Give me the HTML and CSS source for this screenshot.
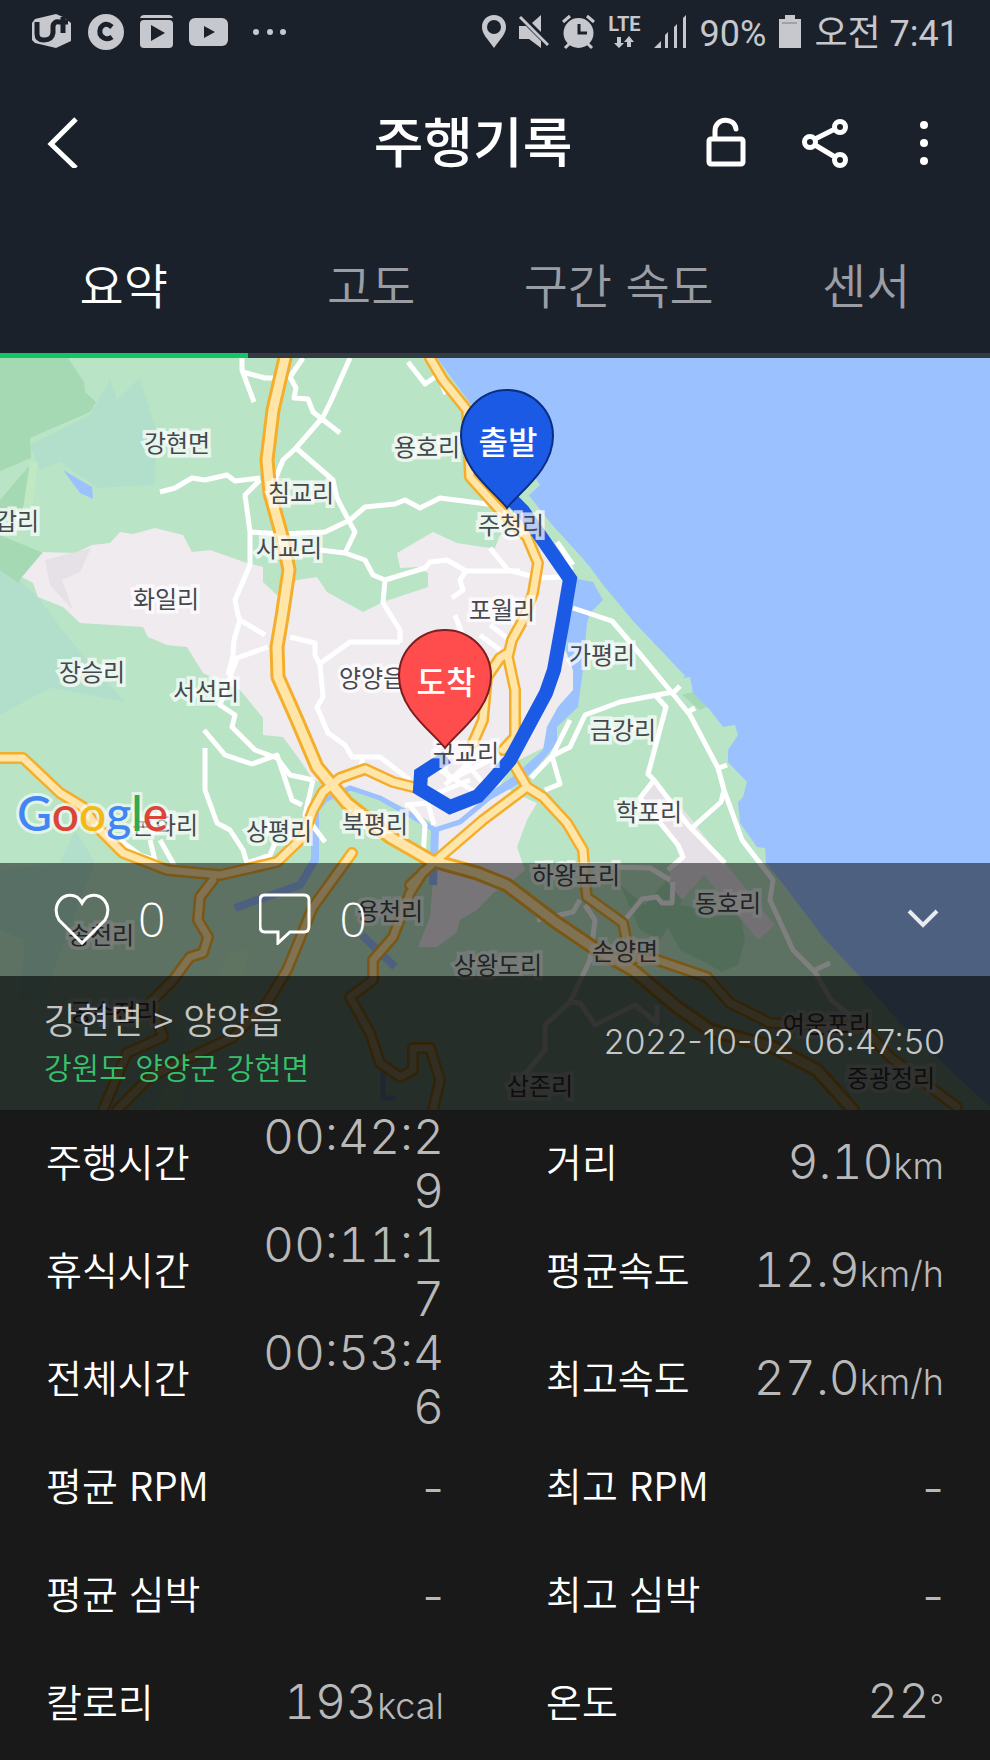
FILE: index.html
```html
<!DOCTYPE html>
<html lang="ko">
<head>
<meta charset="utf-8">
<meta name="viewport" content="width=device-width, initial-scale=1">
<title>주행기록</title>
<link rel="stylesheet" href="styles.css">
</head>
<body>
<div class="status">
  <div class="status-group notices">
    <svg width="40" height="36" viewBox="0 0 40 36"><path class="fill" d="M3 5 24 0 31 3 39 9V27L24 34 3 29 0 26V9z"/><path class="cut" d="M5 8V20Q5 26 12 26Q20 26 21 19V12Q22 7 27 8M26 8H36M31 3V19"/></svg>
    <svg width="36" height="36" viewBox="0 0 36 36"><circle class="fill" cx="18" cy="18" r="18"/><path class="cut" d="M24 13Q17 7 12.500 14Q10 21 16 24Q20 26 24 23"/></svg>
    <svg width="33" height="36" viewBox="0 0 33 36"><path class="fill" d="M0 4Q1 1 4 1H29Q32 1 33 4z"/><rect class="fill" y="6" width="33" height="28" rx="4"/><path class="hole" d="M11 11 25 19 11 27z"/></svg>
    <svg width="39" height="36" viewBox="0 0 39 36"><rect class="fill" y="4" width="39" height="28" rx="6"/><path class="hole" d="M15 12 26 18 15 24z"/></svg>
    <svg class="more-notices" width="36" height="36" viewBox="0 0 36 36"><g class="fill"><circle cx="4" cy="18" r="3"/><circle cx="18" cy="18" r="3"/><circle cx="31" cy="18" r="3"/></g></svg>
  </div>
  <div class="status-group">
    <svg width="24" height="36" viewBox="0 0 24 36"><path class="fill" fill-rule="evenodd" d="M12 1C5 1 0 6 0 13C0 20 5 24 12 34C19 24 24 20 24 13C24 6 19 1 12 1zM12 6A7 7 0 1 1 12 20A7 7 0 1 1 12 6z"/></svg>
    <svg width="30" height="36" viewBox="0 0 30 36"><path class="fill" d="M0 12H7L22 27V34L10 25H0zM22 1V18L13 9z"/><path class="slash" d="M1 3 29 31"/></svg>
    <svg width="33" height="36" viewBox="0 0 33 36"><circle class="fill" cx="16.500" cy="19" r="15"/><path class="slash" d="M1 8 8 2M25 2 32 8M3 34 8 29M30 34 25 29"/><path class="hand" d="M17 10V19H25"/></svg>
    <span class="lte">LTE<svg width="20" height="13" viewBox="0 0 20 13"><path class="fill" d="M3 1H7V7H10L5 12 0 7H3zM13 11H17V6H20L15 0 10 6H13z"/></svg></span>
    <svg width="33" height="36" viewBox="0 0 33 36"><path class="fill" d="M0 34 7 27V34zM11 21 14 18V34H11zM20 13 23 10V34H20zM29 4 32 1V34H29z"/></svg>
    <span class="status-text">90%</span>
    <svg width="22" height="36" viewBox="0 0 22 36"><path class="fill" d="M0 5H6V1H16V5H22V34H0z"/><path class="level" d="M3 9H18"/></svg>
    <span class="status-text">오전 7:41</span>
  </div>
</div>

<header class="bar">
  <button class="icon-btn" aria-label="뒤로"><svg width="34" height="52" viewBox="0 0 34 52"><path class="line" d="M30 3 5 28 30 52"/></svg></button>
  <h1 class="title">주행기록</h1>
  <div class="bar-actions">
    <button class="icon-btn" aria-label="잠금 해제"><svg width="40" height="52" viewBox="0 0 40 52"><rect class="line" x="3" y="23" width="34" height="25" rx="2"/><path class="line round" d="M9 22V15C9 1 29 1 30 13"/></svg></button>
    <button class="icon-btn" aria-label="공유"><svg width="48" height="52" viewBox="0 0 48 52"><g class="line"><circle cx="39" cy="11" r="5.500"/><circle cx="9" cy="26" r="5.500"/><circle cx="39" cy="44" r="5.500"/><path d="M14 23 34 13M14 29 34 41"/></g></svg></button>
    <button class="icon-btn" aria-label="더보기"><svg width="40" height="52" viewBox="0 0 40 52"><g class="dots"><circle cx="20" cy="9" r="4"/><circle cx="20" cy="27" r="4"/><circle cx="20" cy="45" r="4"/></g></svg></button>
  </div>
</header>

<nav class="tabs">
  <button class="tab active">요약</button>
  <button class="tab">고도</button>
  <button class="tab">구간 속도</button>
  <button class="tab">센서</button>
</nav>

<main>
<section class="map">
<svg class="map-canvas" viewBox="0 358 990 752" preserveAspectRatio="xMidYMid slice">
  <rect class="land" y="358" width="990" height="752"/>
  <path class="teal" d="M30 445 90 415 110 380 117 400 140 378 156 430 155 485 98 488 60 462 40 470zM0 560 40 600 70 640 125 702 90 695 50 688 0 715zM60 863 75 830 95 863 80 900 50 980 45 1000 20 1000 25 940 0 930V870zM120 1110 165 1010 200 1060 190 1110z"/>
  <path class="forest" d="M0 358H68L84 382 85 392 96 402 90 412 30 438 31 458 0 471zM0 500 30 465 25 510 0 530zM0 535 43 553 43 560 22 577 18 583 0 570z"/>
  <path class="pale" d="M30 462 38 462 32 512 22 515zM230 952 250 950 235 1005 190 1070 180 1110 155 1110 205 1000z"/>
  <path class="forest" d="M682 695 692 692 712 705 700 710zM620 885 645 905 680 865 700 860 680 905 740 912 745 940 738 965 722 972 700 960 680 950 668 928 660 940 640 930z"/>
  <path class="lake" d="M63 470 92 487 93 499 80 493z"/>
  <path class="urban" d="M22 577 43 552 75 553 92 545 110 543 120 532 133 534 155 528 183 535 192 552 210 550 247 563 263 567V582L277 595 297 580 317 577 327 592 363 612 383 602 428 587V573L417 567 400 568 397 553 433 532 457 543 483 547 495 548 500 535 525 528 563 580 562 610 565 650 573 670V690L558 707 547 727 545 747 515 762 500 785 530 800 537 803 527 820 517 847 525 870 510 883 493 893 477 910 460 920 457 932 437 947H418L430 917 433 880V823L403 807 383 797 360 790 340 787 313 780 300 760 283 737 263 735V718L240 690 203 673 187 647 167 645 148 637 143 627 80 623 63 607 38 597 33 583z"/>
  <path class="urban2" d="M654 780 688 815 725 863 775 925 758 940 740 918 704 875 682 900 668 882 670 873 685 858 679 850 680 843 640 800z"/>
  <path class="urban2" d="M45 560 91 548 80 572 62 580 73 610 50 585z"/>
  <path class="lake" d="M437 358 470 403 510 440 540 485 527 497 590 567 623 613 683 678 690 677 693 693 710 710 723 727 735 725 738 735 728 750V762L747 782 743 797 738 802 740 823 757 847 765 848 766 863 780 880 823 937 860 977 900 1023 990 1107V358z"/>
  <path class="shore" d="M525 495 550 527 580 560 595 580 630 622 683 678"/>
  <path class="lake" d="M572 578 593 582 603 600 590 613 587 623 583 670 578 707 557 727 557 743 537 767 520 783 490 800 484 796 515 775 543 750 547 727 558 707 573 690V670L566 650z"/>
  <path class="river" d="M490 797 460 822 435 830 410 815 380 798 350 788 325 800 315 812"/>
  <path class="river wide" d="M315 812V860L300 885 235 908M435 830 433 885M362 935 395 967"/>
  <path class="river" d="M383 1070V1098H396"/>

  <g class="street">
    <path d="M242 358 242 370 254 402M243 372 265 378H275M303 358 290 377 296 388 294 398 308 399 313 412 340 433M350 358 330 403 323 417 296 448 283 460 275 480M296 448 333 480 337 498 350 523 355 532 345 553M160 492 175 488 192 478 205 480 227 475 235 481 260 478M260 480 245 495 250 532V565L235 600 238 615 240 620 265 635M250 532 283 534 325 532 350 520 365 507 395 504 405 500 420 508 440 498 495 505M320 550 345 553 365 560 373 575 385 580 425 568 430 562 447 560 466 571 520 571M385 580 383 603 400 630V643M466 571 460 580 463 590 452 598M408 362 425 384 438 375 446 394"/>
    <path d="M240 620 234 640 233 655 228 675M268 647 237 658 220 705 235 715 232 727 255 750 277 758 290 775 313 780M204 730 225 755 252 764 277 755 292 800 302 805M205 748V790L217 823 230 830 243 850 247 863 270 855 275 843M290 637 315 643V655L320 665 323 697 317 707 328 733 345 745 352 757H380L410 780M318 665 350 642H400M363 757 360 770M313 780 305 815 325 842M120 840 140 855 155 860 150 840M160 840 178 872M408 803 425 825 423 857M405 805 428 803 434 825"/>
    <path d="M530 523 572 570M557 542 573 565M490 548 508 570 538 578 562 577M573 608 612 621 630 642 673 694 690 715 718 768 724 790 742 840 773 880 770 900 793 950 815 972 831 1000 850 1015M673 692 620 702 585 715 570 747 552 756 531 778M570 720 552 756 560 784 545 790M655 695 666 707 648 774 654 780 688 825 725 863M654 780 640 798 678 845 683 857 668 870M724 790 721 802 693 827M673 693 680 686M686 713 695 708M719 768 727 765M670 880 650 868 610 867M673 882 672 903H662L657 897 642 899 625 920M580 900 573 912 537 920M585 905 595 920 590 960 570 1002 545 1025V1050L520 1080M570 1002 580 1003 595 1025 635 1005 657 1023V1005M815 970 830 963"/>
    <path d="M455 615 470 655M490 625 510 640M480 635 500 650M435 748 450 780 490 760M440 770 480 795M445 785 472 760M460 755 482 782M433 795 470 780M445 857 460 870"/>
  </g>
  <g id="major" class="casing">
    <path d="M0 758H23L60 793 83 807 97 827 123 853 167 870 220 875 277 862 303 837 313 810 323 792 340 778 365 769 393 782 413 787"/>
    <path d="M430 358 443 380 467 410 470 477 497 507 527 537 538 563 533 593 523 620 512 640 508 657 515 690 515 737 503 750M508 653 500 658 487 677 483 720 473 743"/>
    <path d="M410 885 440 857 483 820 527 787 513 763M527 787 543 797 567 823 583 850 585 880 587 897 623 923 630 958 657 960 707 977 730 1003 770 1023 863 1027 890 1057 957 1107"/>
    <path d="M352 853 313 907 287 970 267 1003 233 1037 150 1077 117 1110"/>
    <path d="M213 880 200 897 198 920 208 937 203 953 190 957 173 980 150 1003 163 1037 127 1053 103 1110M423 872 410 893 393 937 373 960V980L350 997 370 1033 380 1063 400 1077 413 1070V1048H430L440 1080 433 1110"/>
    <path class="trunk" d="M285 358 273 410 267 460 270 493 283 540 289 570 282 617 277 647 278 677 297 720 317 767 347 803 390 837 430 860 477 873 507 885 557 923 597 950 633 970 677 1007 710 1030 773 1047 817 1070 853 1110"/>
  </g>
  <use href="#major" class="inner"/>

  <path class="route" d="M507 495 523 511 570 579 563 620 554 670 546 693 510 760 490 783 478 796 450 807 420 789 421 774 447 757"/>

  <g class="place">
    <text x="177" y="452">강현면</text><text x="427" y="456">용호리</text><text x="301" y="502">침교리</text><text x="289" y="557">사교리</text><text x="6" y="530">답갑리</text><text x="166" y="608">화일리</text><text x="511" y="534">주청리</text><text x="502" y="619">포월리</text><text x="602" y="664">가평리</text><text x="92" y="681">장승리</text><text x="206" y="700">서선리</text><text x="372" y="687">양양읍</text><text x="466" y="762">구교리</text><text x="623" y="739">금강리</text><text x="649" y="821">학포리</text><text x="165" y="834">논화리</text><text x="279" y="840">상평리</text><text x="375" y="833">북평리</text><text x="576" y="884">하왕도리</text><text x="728" y="912">동호리</text><text x="390" y="920">용천리</text><text x="101" y="944">송천리</text><text x="498" y="974">상왕도리</text><text x="625" y="960">손양면</text><text x="114" y="1021">공수전리</text><text x="827" y="1033">여운포리</text><text x="540" y="1095">삽존리</text><text x="891" y="1087">중광정리</text>
  </g>
  <g class="pin">
    <path class="start" d="M507 508C495 492 461 470 461 436A46 46 0 0 1 553 436C553 470 519 492 507 508z"/>
    <path class="end" d="M445 748C433 732 399 710 399 676A46 46 0 0 1 491 676C491 710 457 732 445 748z"/>
    <text x="508" y="454">출발</text><text x="446" y="694">도착</text>
  </g>
  <text class="google" x="17" y="831"><tspan class="g-blue">G</tspan><tspan class="g-red">o</tspan><tspan class="g-yellow">o</tspan><tspan class="g-blue">g</tspan><tspan class="g-green">l</tspan><tspan class="g-red">e</tspan></text>
</svg>
<div class="overlay">
  <div class="social">
    <button class="count"><svg width="56" height="52" viewBox="0 0 56 52"><path class="thin" d="M28 50 5 27C-4 12 10-3 23 4Q26 6 28 10Q30 6 33 4C46-3 60 12 51 27z"/></svg>0</button>
    <button class="count"><svg width="52" height="52" viewBox="0 0 52 52"><path class="thin" d="M6 2H45Q50 2 50 7V33Q50 39 45 39H31L19 50V39H6Q1 39 1 33V7Q1 2 6 2z"/></svg>0</button>
    <button class="collapse" aria-label="접기"><svg width="32" height="22" viewBox="0 0 32 22"><path class="chev" d="M2 3 16 17 30 3"/></svg></button>
  </div>
  <div class="info">
    <div><p class="route-name">강현면 &gt; 양양읍</p><p class="region">강원도 양양군 강현면</p></div>
    <time class="date">2022-10-02 06:47:50</time>
  </div>
</div>
</section>

<dl class="stats">
  <div class="stat"><dt>주행시간</dt><dd class="clock">00:42:29</dd></div>
  <div class="stat"><dt>거리</dt><dd>9.10<small>km</small></dd></div>
  <div class="stat"><dt>휴식시간</dt><dd class="clock">00:11:17</dd></div>
  <div class="stat"><dt>평균속도</dt><dd>12.9<small>km/h</small></dd></div>
  <div class="stat"><dt>전체시간</dt><dd class="clock">00:53:46</dd></div>
  <div class="stat"><dt>최고속도</dt><dd>27.0<small>km/h</small></dd></div>
  <div class="stat"><dt>평균 RPM</dt><dd class="none">-</dd></div>
  <div class="stat"><dt>최고 RPM</dt><dd class="none">-</dd></div>
  <div class="stat"><dt>평균 심박</dt><dd class="none">-</dd></div>
  <div class="stat"><dt>최고 심박</dt><dd class="none">-</dd></div>
  <div class="stat"><dt>칼로리</dt><dd>193<small>kcal</small></dd></div>
  <div class="stat"><dt>온도</dt><dd>22<small class="degree">°</small></dd></div>
</dl>
</main>
</body>
</html>
```
FILE: styles.css
```css
* { box-sizing: border-box; }
body {
  margin: 0;
  background: #191919;
  color: #fff;
  font-family: "Noto Sans CJK KR", sans-serif;
  font-weight: 350;
}
button {
  padding: 0;
  border: 0;
  background: none;
  color: inherit;
  font: inherit;
}
svg { display: block; flex: none; }
p, h1, dl, dd { margin: 0; }

/* status bar */
.status {
  display: flex;
  justify-content: space-between;
  align-items: center;
  height: 64px;
  padding: 0 31px 0 32px;
  background: #1b212b;
  color: #c6c8ce;
}
.status-group { display: flex; align-items: center; gap: 13px; }
.notices { gap: 16px; }
.more-notices { margin-left: 8px; }
.status-text {
  padding-top: 4px;
  font: 400 36px/44px Roboto, "Noto Sans CJK KR", sans-serif;
  white-space: nowrap;
}
.lte {
  display: flex;
  flex-direction: column;
  align-items: center;
  gap: 4px;
  font: 700 20px/16px Roboto, sans-serif;
}
.fill { fill: #c6c8ce; }
.hole { fill: #1b212b; }
.cut, .hand, .level { fill: none; stroke: #1b212b; stroke-width: 5; }
.hand { stroke-width: 3; }
.level { stroke: #777b82; stroke-width: 1; }
.slash { fill: none; stroke: #c6c8ce; stroke-width: 3; }

/* title bar */
.bar {
  display: grid;
  grid-template-columns: 1fr auto 1fr;
  align-items: center;
  height: 156px;
  padding: 0 46px;
  background: #1b212b;
}
.icon-btn { display: block; justify-self: start; }
.title { padding: 0 44px 4px 0; font-size: 54px; line-height: 72px; font-weight: 500; }
.bar-actions { display: flex; justify-content: flex-end; gap: 55px; }
.line { fill: none; stroke: #fff; stroke-width: 5; }
.round { stroke-linecap: round; }
.dots { fill: #fff; }

/* tabs */
.tabs { display: grid; grid-template-columns: repeat(4, 1fr); background: #1b212b; }
.tab {
  height: 138px;
  padding-bottom: 8px;
  border-bottom: 5px solid #343a42;
  color: #9a9da3;
  font-size: 48px;
  line-height: 64px;
}
.tab.active { border-color: #0fc765; color: #fff; }

/* map */
.map { position: relative; }
.map-canvas { width: 100%; height: auto; }
.land { fill: #bae4c6; }
.teal { fill: #b1dfcb; }
.forest { fill: #a5d9b4; }
.pale { fill: #bfe8c3; }
.urban { fill: #efebef; }
.urban2 { fill: #e6e1e6; }
.lake { fill: #9cc1ff; }
.shore { fill: none; stroke: #bae4c6; stroke-width: 6; }
.river { fill: none; stroke: #9cc1ff; stroke-width: 5; }
.river.wide { stroke-width: 8; }
.street { fill: none; stroke: #fff; stroke-width: 5; stroke-linejoin: round; }
.casing { fill: none; stroke-linejoin: round; stroke-linecap: round; }
.casing { stroke: var(--road, #f4ae2b); stroke-width: var(--road-width, 12px); }
.trunk { stroke-width: var(--trunk-width, 15px); }
.inner { --road: #ffe6a8; --road-width: 7px; --trunk-width: 9px; }
.route { fill: none; stroke: #1b5ae4; stroke-width: 14; }
.place {
  fill: #45484d;
  stroke: rgba(255, 255, 255, .7);
  stroke-width: 7px;
  paint-order: stroke;
  font-size: 24px;
  font-weight: 400;
  text-anchor: middle;
}
.pin { text-anchor: middle; font-size: 32px; font-weight: 500; fill: #fff; }
.start { fill: #1b5ae4; stroke: #0b2f80; stroke-width: 2; }
.end { fill: #ff4c4c; stroke: #7c1d20; stroke-width: 2; }
.google {
  font: 500 48px Lato, sans-serif;
  stroke: rgba(255, 255, 255, .6);
  stroke-width: 6px;
  paint-order: stroke;
}
.g-blue { fill: #4285f4; }
.g-red { fill: #db4437; }
.g-yellow { fill: #f4b912; }
.g-green { fill: #34a853; }

.overlay { position: absolute; right: 0; bottom: 0; left: 0; }
.social {
  display: flex;
  align-items: center;
  gap: 94px;
  height: 113px;
  padding: 0 51px 2px 54px;
  background: rgba(0, 0, 0, .5);
}
.count {
  display: flex;
  align-items: center;
  gap: 28px;
  font: 300 48px/56px "Open Sans", sans-serif;
}
.collapse { margin-left: auto; }
.thin { fill: none; stroke: #fff; stroke-width: 3; }
.chev { fill: none; stroke: #e8ebf0; stroke-width: 4; }
.info {
  display: flex;
  align-items: center;
  justify-content: space-between;
  height: 134px;
  padding: 0 45px 2px 44px;
  background: rgba(0, 0, 0, .8);
}
.route-name { color: #c4c6c5; font-size: 36px; line-height: 48px; }
.region { color: #35c26c; font-size: 30px; line-height: 48px; }
.date { color: #c4c6c8; font: 300 34px/48px Inter, sans-serif; }

/* ride statistics */
.stats {
  display: grid;
  grid-template-columns: 1fr 1fr;
  column-gap: 102px;
  padding: 0 46px;
}
.stat { display: flex; align-items: center; justify-content: space-between; height: 108px; }
dt { padding-bottom: 8px; font-size: 39px; line-height: 54px; white-space: nowrap; }
dd {
  color: #b8b8b8;
  font: 300 48px/54px Inter, sans-serif;
  font-variant-numeric: tabular-nums;
  text-align: right;
}
.none { font-variant-numeric: normal; }
.clock { max-width: 190px; overflow-wrap: anywhere; }
small { font-size: 36px; }
.degree { font-size: 32px; }
```
